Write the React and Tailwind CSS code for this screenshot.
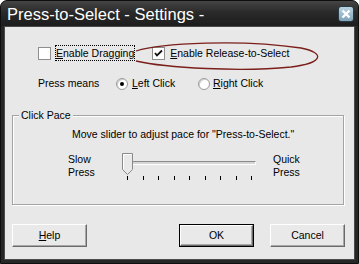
import React from 'react';

const Mn = ({ children }) => <span className="underline underline-offset-[1px]">{children}</span>;

const CheckBox = ({ checked }) => (
    <div className="w-[13px] h-[13px] border border-[#8e8e8e] bg-white flex items-center justify-center shrink-0">
        {checked && (
            <svg width="9" height="9" viewBox="0 0 9 9">
                <path d="M1 4 L3 6.5 L8 1.5" stroke="#111" strokeWidth="1.8" fill="none" />
            </svg>
        )}
    </div>
);

const Radio = ({ on }) => (
    <div className="w-[12px] h-[12px] rounded-full border border-[#9a9a9a] bg-white flex items-center justify-center shrink-0 shadow-[inset_1px_1px_0_#d0d0d0]">
        {on && <div className="w-[4px] h-[4px] rounded-full bg-black" />}
    </div>
);

const Btn = ({ children, def, className = '' }) => (
    <div className={`w-[75px] h-[23px] ${def ? 'border border-black' : ''} ${className}`}>
        <div className="w-full h-full border-t border-l border-white border-r border-b border-r-[#6a6a6a] border-b-[#6a6a6a] shadow-[inset_-1px_-1px_0_#a8a8a8] bg-[#e9e9e9] flex items-center justify-center text-[10.5px] text-black">
            {children}
        </div>
    </div>
);

export default function App() {
    const ticks = [0, 1, 2, 3, 4, 5, 6, 7, 8];

    return (
        <div className="w-[359px] h-[264px] bg-[#262626] rounded-t-[7px] border border-[#0e0e0e] flex flex-col relative font-['Liberation_Sans',Arial,sans-serif] overflow-hidden">
            {/* title bar */}
            <div className="h-[25px] flex items-center justify-between pl-[6px] pr-[4px] bg-[linear-gradient(#454545,#2a2a2a_45%,#1c1c1c)]">
                <span className="text-white text-[16.5px] leading-none mt-[1px] tracking-[0px]">Press-to-Select - Settings -</span>
                <div className="w-[16px] h-[16px] rounded-[3px] border border-[#2a3a44] bg-[linear-gradient(#b9d3e2,#7fa4b9)] flex items-center justify-center mt-[1px]">
                    <svg width="10" height="10" viewBox="0 0 10 10">
                        <path d="M1.5 1.5 L8.5 8.5 M8.5 1.5 L1.5 8.5" stroke="white" strokeWidth="2.4" />
                    </svg>
                </div>
            </div>

            {/* client area */}
            <div className="flex-1 mx-[3px] mb-[3px] border border-[#4a4a4a] bg-[#e8e8e8] text-[10.5px] text-black leading-[13px]">
                <div className="mt-[18px] h-[16px] flex items-center pl-[33px]">
                    <CheckBox />
                    <div className="ml-[4px] h-[16px] px-0 border border-dotted border-black flex items-center">
                        <span><Mn>E</Mn>nable Dragging</span>
                    </div>
                    <div className="ml-[17px]"><CheckBox checked /></div>
                    <span className="ml-[5px]"><Mn>E</Mn>nable Release-to-Select</span>
                </div>

                <div className="mt-[15px] h-[15px] flex items-center pl-[33px]">
                    <span className="w-[78px]">Press means</span>
                    <div className="w-[82px] flex items-center">
                        <Radio on />
                        <span className="ml-[4px]"><Mn>L</Mn>eft Click</span>
                    </div>
                    <Radio />
                    <span className="ml-[3px]"><Mn>R</Mn>ight Click</span>
                </div>

                {/* group box */}
                <div className="relative mt-[24px] ml-[7px] w-[332px] h-[90px] border border-[#a4a4a4] shadow-[inset_1px_1px_0_#ffffff,1px_1px_0_#ffffff]">
                    <span className="absolute left-[6px] top-[-7px] px-[2px] bg-[#e8e8e8]">Click Pace</span>
                    <div className="pt-[12px] pl-[59px]">Move slider to adjust pace for "Press-to-Select."</div>
                    <div className="mt-[12px] flex pl-[55px]">
                        <div className="w-[54px]">Slow<br />Press</div>
                        <div className="w-[151px] h-[30px] relative">
                            <div className="absolute left-[5px] top-[8px] w-[129px] h-[4px] border-t border-l border-[#8a8a8a] border-b border-r border-b-white border-r-white bg-[#d6d6d6]" />
                            <svg className="absolute left-0 top-0" width="12" height="22" viewBox="0 0 12 22">
                                <path d="M0.5 0.5 H10.5 V16.5 L5.5 21.5 L0.5 16.5 Z" fill="#e9e9e9" stroke="#8a8a8a" />
                                <path d="M1.5 16 V1.5 H9.5" stroke="white" fill="none" />
                            </svg>
                            <div className="absolute left-[5px] top-[23px] w-[125px] flex justify-between items-end">
                                {ticks.map(t => (
                                    <div key={t} className={`w-[1px] bg-black ${t === 0 ? 'h-[4px]' : 'h-[4px]'}`} />
                                ))}
                            </div>
                        </div>
                        <div>Quick<br />Press</div>
                    </div>
                </div>

                <div className="mt-[19px] flex pl-[7px]">
                    <Btn><span><Mn>H</Mn>elp</span></Btn>
                    <Btn def className="ml-[92px]">OK</Btn>
                    <Btn className="ml-[16px]">Cancel</Btn>
                </div>
            </div>

            {/* hand-drawn annotation */}
            <svg className="absolute left-0 top-0 pointer-events-none" width="359" height="264" viewBox="0 0 359 264">
                <path d="M135 50 C 160 42, 240 38, 300 47 C 325 52, 322 62, 290 66 C 240 71, 165 67, 135 60" stroke="#7a1f1a" strokeWidth="1.3" fill="none" />
            </svg>
        </div>
    );
}
